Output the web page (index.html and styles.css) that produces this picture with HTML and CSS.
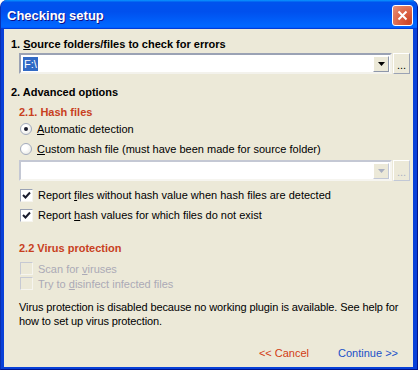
FILE: index.html
```html
<!DOCTYPE html>
<html lang="en">
<head>
    <meta charset="UTF-8">
    <title>Checking setup</title>
    <link rel="stylesheet" href="styles.css">
</head>
<body>
    <div class="window">
        <div class="titlebar">
            <span class="title">Checking setup</span>
            <span class="close">
                <svg width="11" height="11" viewBox="0 0 11 11"><path d="M1.5 1.5 L9.5 9.5 M9.5 1.5 L1.5 9.5" stroke="#fff" stroke-width="2" fill="none"/></svg>
            </span>
        </div>

        <div class="client">
            <div class="heading first">1. <u>S</u>ource folders/files to check for errors</div>
            <div class="combo-row">
                <div class="combo">
                    <span class="combo-text"><span class="selected">F:\</span></span>
                    <span class="drop"><svg width="7" height="4" viewBox="0 0 7 4"><path d="M0 0 H7 L3.5 4 Z" fill="#000"/></svg></span>
                </div>
                <span class="browse">...</span>
            </div>

            <div class="heading adv">2. Advanced options</div>
            <div class="subheading">2.1. Hash files</div>

            <div class="option">
                <span class="radio checked"></span>
                <span><u>A</u>utomatic detection</span>
            </div>
            <div class="option">
                <span class="radio"></span>
                <span><u>C</u>ustom hash file (must have been made for source folder)</span>
            </div>
            <div class="combo-row disabled">
                <div class="combo">
                    <span class="combo-text"></span>
                    <span class="drop"><svg width="7" height="4" viewBox="0 0 7 4"><path d="M0 0 H7 L3.5 4 Z" fill="#A9AFC0"/></svg></span>
                </div>
                <span class="browse">...</span>
            </div>

            <div class="option check-first">
                <span class="checkbox checked"><svg width="9" height="9" viewBox="0 0 9 9"><path d="M1 4 L3.5 6.5 L8 1.5" stroke="#1a1d2e" stroke-width="2" fill="none"/></svg></span>
                <span>Report <u>f</u>iles without hash value when hash files are detected</span>
            </div>
            <div class="option">
                <span class="checkbox checked"><svg width="9" height="9" viewBox="0 0 9 9"><path d="M1 4 L3.5 6.5 L8 1.5" stroke="#1a1d2e" stroke-width="2" fill="none"/></svg></span>
                <span>Report <u>h</u>ash values for which files do not exist</span>
            </div>

            <div class="subheading virus">2.2 Virus protection</div>
            <div class="option small off">
                <span class="checkbox"></span>
                <span>Scan for <u>v</u>iruses</span>
            </div>
            <div class="option small off">
                <span class="checkbox"></span>
                <span>Try to <u>d</u>isinfect infected files</span>
            </div>

            <p class="note">Virus protection is disabled because no working plugin is available. See help for how to set up virus protection.</p>

            <div class="actions">
                <span class="link cancel">&lt;&lt; Cancel</span>
                <span class="link continue">Continue &gt;&gt;</span>
            </div>
        </div>
    </div>
</body>
</html>
```

FILE: styles.css
```css
body {
    margin: 0;
    background-color: #ffffff;
    font-family: 'Liberation Sans', Arial, sans-serif;
    font-size: 11px;
    color: #000;
}

.window {
    width: 418px;
    height: 370px;
    box-sizing: border-box;
    display: flex;
    flex-direction: column;
    background-color: #0840d8;
    border-radius: 7px 7px 0 0;
    border-left: 1px solid #0a2fb0;
    border-right: 1px solid #00138c;
    border-bottom: 1px solid #00138c;
    overflow: hidden;
}

.titlebar {
    height: 29px;
    flex-shrink: 0;
    display: flex;
    align-items: center;
    justify-content: space-between;
    padding: 0 4px 0 6px;
    background: linear-gradient(180deg, #0997ff, #0053ee 8%, #0050ee 40%, #0066ff 88%, #0066ff 93%, #005bff 95%, #003dd7 96%, #003dd7);
}

.title {
    color: #fff;
    font-weight: bold;
    font-size: 13px;
    text-shadow: 1px 1px #0f1089;
    padding-top: 1px;
}

.close {
    width: 19px;
    height: 19px;
    display: flex;
    align-items: center;
    justify-content: center;
    border: 1px solid #fff;
    border-radius: 3px;
    background: radial-gradient(circle at 85% 85%, #cc4628 0%, #dc6143 45%, #e5937a 100%);
    margin-top: 1px;
}

.client {
    flex: 1;
    margin: 0 4px 2px 3px;
    padding: 0 0 0 7px;
    background-color: #ece9d8;
    display: flex;
    flex-direction: column;
}

.heading {
    font-weight: bold;
    line-height: 14px;
}

.first {
    margin-top: 8px;
}

.adv {
    margin-top: 11px;
}

.subheading {
    font-weight: bold;
    color: #c8401e;
    line-height: 14px;
    margin-top: 6px;
    margin-left: 8px;
}

.virus {
    margin-top: 16px;
}

.combo-row {
    display: flex;
    margin-left: 8px;
    margin-top: 2px;
    height: 21px;
}

.combo-row.disabled {
    margin-top: 1px;
}

.combo {
    width: 373px;
    box-sizing: border-box;
    display: flex;
    background-color: #fff;
    border: 2px solid;
    border-color: #9aa2b4 #f3f2ec #f3f2ec #9aa2b4;
    padding: 1px 1px 0 1px;
}

.combo-text {
    flex: 1;
    display: flex;
    align-items: center;
    padding-left: 1px;
}

.selected {
    background-color: #316ac5;
    color: #fff;
    padding: 0 1px;
    line-height: 14px;
}

.drop {
    width: 16px;
    box-sizing: border-box;
    display: flex;
    align-items: center;
    justify-content: center;
    background-color: #ece9d8;
    border: 1px solid;
    border-color: #fff #8e97aa #8e97aa #fff;
}

.browse {
    width: 17px;
    margin-left: 1px;
    box-sizing: border-box;
    display: flex;
    align-items: flex-end;
    justify-content: center;
    padding-bottom: 3px;
    line-height: 10px;
    background-color: #ece9d8;
    border: 1px solid;
    border-color: #fff #9aa2b4 #9aa2b4 #fff;
}

.disabled .combo {
    border-color: #c4c8d4 #f6f5f0 #f6f5f0 #c4c8d4;
}

.disabled .drop {
    border-color: #fff #c2c8d6 #c2c8d6 #fff;
}

.disabled .browse {
    color: #a9afc0;
    border-color: #fff #c2c8d6 #c2c8d6 #fff;
}

.option {
    display: flex;
    align-items: center;
    gap: 5px;
    height: 20px;
    margin-left: 9px;
}

.check-first {
    margin-top: 4px;
}

.option.small {
    height: 15px;
}

.virus + .option {
    margin-top: 6px;
}

.off {
    color: #abaab6;
}

.radio {
    width: 12px;
    height: 12px;
    box-sizing: border-box;
    border-radius: 50%;
    border: 1px solid #a3abbd;
    background: radial-gradient(circle at 35% 35%, #ffffff 30%, #e2e2dc 100%);
    display: flex;
    align-items: center;
    justify-content: center;
}

.radio.checked::after {
    content: "";
    width: 4px;
    height: 4px;
    border-radius: 50%;
    background-color: #1a1d2e;
}

.checkbox {
    width: 13px;
    height: 13px;
    box-sizing: border-box;
    border: 1px solid #9aa2b4;
    border-right-color: #f6f5ef;
    border-bottom-color: #f6f5ef;
    background-color: #fff;
    display: flex;
    align-items: center;
    justify-content: center;
}

.off .checkbox {
    border-color: #c6c9d3 #f6f5ef #f6f5ef #c6c9d3;
    background-color: #ece9d8;
}

.note {
    margin: 9px 0 0 8px;
    line-height: 14px;
    width: 392px;
    letter-spacing: -0.1px;
}

.actions {
    display: flex;
    justify-content: flex-end;
    gap: 29px;
    margin-top: 18px;
    padding-right: 15px;
    line-height: 14px;
}

.cancel {
    color: #d23c14;
}

.continue {
    color: #2050c8;
}
```
